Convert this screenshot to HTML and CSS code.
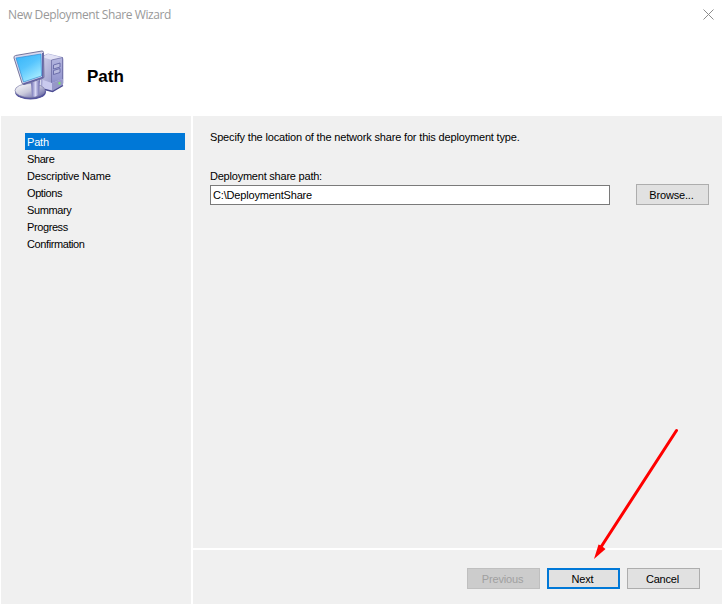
FILE: index.html
```html
<!DOCTYPE html>
<html lang="en">
<head>
<meta charset="utf-8">
<title>New Deployment Share Wizard</title>
<link rel="stylesheet" href="styles.css">
</head>
<body>
<div class="window">
  <div class="titlebar">
    <span class="caption">New Deployment Share Wizard</span>
    <svg class="close" width="11" height="11" viewBox="0 0 11 11"><path d="M.5 .5l10 10M10.500 .5l-10 10"/></svg>
  </div>
  <header class="header">
    <svg class="computer" width="56" height="54" viewBox="0 0 56 54">
      <defs>
        <linearGradient id="screen" x1="0" y1="0" x2=".6" y2="1"><stop offset="0" stop-color="#35b4f8"/><stop offset=".5" stop-color="#55c4fd"/><stop offset="1" stop-color="#a4ebff"/></linearGradient>
        <linearGradient id="side" x1="0" y1="0" x2="1" y2="1"><stop offset="0" stop-color="#d5d5ee"/><stop offset="1" stop-color="#7c7eb8"/></linearGradient>
        <linearGradient id="front" x1="0" y1="0" x2="0" y2="1"><stop offset="0" stop-color="#b4b6df"/><stop offset=".65" stop-color="#9698cf"/><stop offset="1" stop-color="#6d6fad"/></linearGradient>
        <linearGradient id="base" x1="0" y1="0" x2="1" y2="1"><stop offset="0" stop-color="#ffffff"/><stop offset=".5" stop-color="#c9c9db"/><stop offset="1" stop-color="#5656a0"/></linearGradient>
        <linearGradient id="neck" x1="0" y1="0" x2="1" y2="0"><stop offset="0" stop-color="#6868ae"/><stop offset=".5" stop-color="#d8d8f4"/><stop offset="1" stop-color="#6060a6"/></linearGradient>
      </defs>
      <path d="M30 8l7-3 14.500 3.500 .5 2v24l-10 8-12-3z" fill="url(#side)" stroke="#8e90c5" stroke-width=".7"/>
      <path d="M31 8l6-3 14.500 3.500-9 3z" fill="#e2e2f5"/>
      <path d="M40.500 11l11-2.500V36L40.500 42z" fill="url(#front)" stroke="#65669e" stroke-width=".7"/>
      <path d="M42.500 16l6.500-2v4l-6.500 2zM42.500 21.500l6.500-2v4l-6.500 2z" fill="#b8badf" stroke="#5c5e9e" stroke-width=".8"/>
      <path d="M32 31l9 3 10.500-4v6L42 43l-11-3z" fill="#c9caee"/>
      <path d="M41 42.500l10.500-5.500V30L41 34z" fill="#9697c8"/>
      <path d="M34 40.500l7.500 2 10.500-6" fill="none" stroke="#4b4b91" stroke-width="1.300"/>
      <rect x="47.500" y="33" width="2" height="2.500" fill="#7de36a"/>
      <ellipse cx="19.500" cy="43" rx="15.500" ry="7.500" fill="#55559d"/>
      <ellipse cx="19" cy="41.500" rx="15" ry="7" fill="url(#base)" stroke="#7f7faa" stroke-width=".7"/>
      <path d="M20 33l9-2-1 14q-3 4-7 2z" fill="url(#neck)"/>
      <path d="M4.500 6.500L31 2q1.500 0 1.500 1.500L33 28q0 1-1.500 1.500L13 35.500q-1.500 0-2-1.500L3 9q-.5-2 1.500-2.500z" fill="#d8d8ee" stroke="#76769d"/>
      <path d="M31.800 4v24.500l-19.500 6.500" fill="none" stroke="#6061a3" stroke-width="1.500"/>
      <path d="M5 9l25-4 .5 22L12.500 33z" fill="url(#screen)" stroke="#328bd1" stroke-width=".7"/>
    </svg>
    <h1>Path</h1>
  </header>
  <div class="body">
    <nav class="steps">
      <div class="step selected">Path</div>
      <div class="step">Share</div>
      <div class="step wide">Descriptive Name</div>
      <div class="step">Options</div>
      <div class="step">Summary</div>
      <div class="step">Progress</div>
      <div class="step">Confirmation</div>
    </nav>
    <div class="main">
      <section class="page">
        <p class="intro">Specify the location of the network share for this deployment type.</p>
        <label class="label" for="path">Deployment share path:</label>
        <div class="row">
          <input id="path" class="field" type="text" value="C:\DeploymentShare">
          <button class="button">Browse...</button>
        </div>
      </section>
      <footer class="footer">
        <button class="button" disabled>Previous</button>
        <button class="button default">Next</button>
        <button class="button">Cancel</button>
      </footer>
    </div>
  </div>
  <svg class="arrow" width="90" height="135" viewBox="0 0 90 135"><path d="M86.500 5.500L11 122" stroke="#f00" stroke-width="3" stroke-linecap="round"/><path d="M4 134l4.500-14.500 2.500 1 4.500 3.500z" fill="#f00"/></svg>
</div>
</body>
</html>
```
FILE: styles.css
```css
* { box-sizing: border-box; }
body { margin: 0; background: #fff; overflow: hidden; }
.window { position: relative; display: flex; flex-direction: column; width: 722px; height: 604px; background: #fff; color: #000; font: 11px/17px "Liberation Sans", Arial, sans-serif; letter-spacing: -0.17px; }
.titlebar { display: flex; justify-content: space-between; align-items: center; height: 28px; padding: 0 8px; }
.caption { font: 12px/17px "Open Sans", "Noto Sans", sans-serif; letter-spacing: -0.4px; color: #999; }
.close { fill: none; stroke: #8c8c8c; stroke-width: 1; }
.header { display: flex; align-items: center; height: 88px; padding: 7px 0 0 11px; }
h1 { margin: 2px 0 0 20px; font-size: 17px; line-height: 20px; font-weight: bold; letter-spacing: 0; }
.body { display: flex; gap: 2px; flex: 1; padding-left: 1px; }
.steps { width: 190px; padding: 17px 6px 0 24px; background: #f0f0f0; }
.step { height: 17px; padding: 1px 0 0 2px; line-height: 16px; letter-spacing: -0.4px; }
.step.wide { letter-spacing: -0.2px; }
.selected { background: #0078d7; color: #fff; letter-spacing: -0.2px; }
.main { display: flex; flex-direction: column; gap: 2px; flex: 1; }
.page { height: 432px; padding: 13px 13px 0 17px; background: #f0f0f0; }
.intro { margin: 0 0 22px; }
.label { display: block; height: 16px; letter-spacing: -0.22px; }
.row { display: flex; justify-content: space-between; }
.field { width: 400px; height: 20px; margin-top: 1px; padding: 0 2px; border: 1px solid #7a7a7a; border-radius: 0; background: #fff; color: #000; font: inherit; letter-spacing: inherit; outline: none; }
.button { width: 73px; height: 21px; padding: 2px 2px 0 0; border: 1px solid #adadad; border-radius: 0; background: #e1e1e1; color: #000; font: inherit; line-height: 17px; letter-spacing: inherit; }
.button:disabled { border-color: #bfbfbf; background: #ccc; color: #a0a0a0; }
.button.default { padding: 0 2px 0 0; border: 2px solid #0078d7; line-height: 19px; }
.footer { display: flex; gap: 7px; flex: 1; justify-content: flex-end; padding: 18px 22px 0 0; background: #f0f0f0; }
.arrow { position: absolute; left: 590px; top: 425px; fill: none; }
```
